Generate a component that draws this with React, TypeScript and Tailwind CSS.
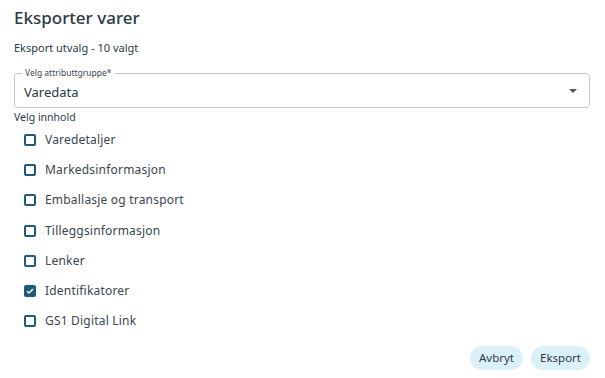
const items = [
  { label: "Varedetaljer", checked: false },
  { label: "Markedsinformasjon", checked: false },
  { label: "Emballasje og transport", checked: false },
  { label: "Tilleggsinformasjon", checked: false },
  { label: "Lenker", checked: false },
  { label: "Identifikatorer", checked: true },
  { label: "GS1 Digital Link", checked: false },
];

function Checkbox({ checked }: { checked: boolean }) {
  if (checked) {
    return (
      <span className="w-[12px] h-[12px] shrink-0 rounded-[2px] bg-[#1d5b79] flex items-center justify-center">
        <svg viewBox="0 0 24 24" className="w-[10px] h-[10px]" fill="none" stroke="white" strokeWidth="3.5">
          <path d="M5 12.5l4.5 4.5L19 7.5" />
        </svg>
      </span>
    );
  }
  return <span className="w-[12px] h-[12px] shrink-0 rounded-[2px] border-2 border-[#1d5b79] bg-white" />;
}

export default function App() {
  return (
    <div className="w-[605px] h-[378px] bg-white text-[#2c3a46] font-['Noto_Sans',sans-serif] px-[14px] pt-[8px] flex flex-col">
      <h1 className="text-[17px] leading-[20px] font-medium">Eksporter varer</h1>
      <p className="text-[11px] leading-[14px] mt-[13px]">Eksport utvalg - 10 valgt</p>

      <div className="relative mt-[18px] mr-[1px] h-[35px] shrink-0 border border-[#c8c8c8] rounded-[4px] flex items-center pl-[9px] pr-[12px]">
        <span className="absolute -top-[7px] left-[7px] bg-white px-[3px] text-[8.5px] leading-[12px] text-[#3a4650]">
          Velg attributtgruppe*
        </span>
        <span className="text-[13px] leading-[16px] flex-1 pt-[2px]">Varedata</span>
        <svg viewBox="0 0 10 5" className="w-[8px] h-[4px]" fill="#555">
          <path d="M0 0h10L5 5z" />
        </svg>
      </div>

      <p className="text-[10.5px] leading-[14px] mt-[2px]">Velg innhold</p>

      <div className="flex flex-col mt-[1px] pl-[10px]">
        {items.map((it) => (
          <label key={it.label} className="flex items-center gap-[9px] h-[30.2px]">
            <Checkbox checked={it.checked} />
            <span className="text-[12px] leading-[14px] tracking-[0.2px] text-[#3a4650]">{it.label}</span>
          </label>
        ))}
      </div>

      <div className="flex justify-end gap-[8px] mt-auto mb-[8px] mr-[1px]">
        <button className="h-[24px] px-[9px] rounded-full bg-[#daf2f7] text-[11.5px] text-[#2c3a46]">Avbryt</button>
        <button className="h-[24px] px-[9px] rounded-full bg-[#daf2f7] text-[11.5px] text-[#2c3a46]">Eksport</button>
      </div>
    </div>
  );
}
